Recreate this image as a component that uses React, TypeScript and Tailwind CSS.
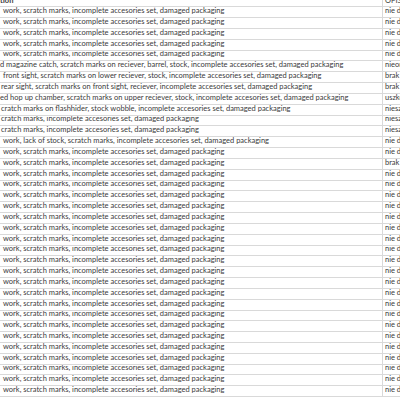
const STD = "work, scratch marks, incomplete accesories set, damaged packaging";

type Row = { desc: string; pad: string; opis: string };

const rows: Row[] = [
  { desc: STD, pad: "pl-[3px]", opis: "nie działa" },
  { desc: STD, pad: "pl-[3px]", opis: "nie działa" },
  { desc: STD, pad: "pl-[3px]", opis: "nie działa" },
  { desc: STD, pad: "pl-[3px]", opis: "nie działa" },
  { desc: STD, pad: "pl-[3px]", opis: "nie działa" },
  {
    desc: "d magazine catch, scratch marks on reciever, barrel, stock, incomplete accesories set, damaged packaging",
    pad: "pl-0",
    opis: "nieoryginalny",
  },
  {
    desc: "front sight, scratch marks on lower reciever, stock, incomplete accesories set, damaged packaging",
    pad: "pl-[3px]",
    opis: "brak",
  },
  {
    desc: "rear sight, scratch marks on front sight, reciever, incomplete accesories set, damaged packaging",
    pad: "pl-[1px]",
    opis: "brak",
  },
  {
    desc: "ed hop up chamber, scratch marks on upper reciever, stock, incomplete accesories set, damaged packaging",
    pad: "pl-0",
    opis: "uszkodzony",
  },
  {
    desc: "cratch marks on flashhider, stock wobble, incomplete accesories set, damaged packaging",
    pad: "pl-[1px]",
    opis: "nieszczelny",
  },
  { desc: "cratch marks, incomplete accesories set, damaged packaging", pad: "pl-[1px]", opis: "nieszczelny" },
  { desc: "cratch marks, incomplete accesories set, damaged packaging", pad: "pl-[1px]", opis: "nieszczelny" },
  {
    desc: "work, lack of stock, scratch marks, incomplete accesories set, damaged packaging",
    pad: "pl-[3px]",
    opis: "nie działa",
  },
  { desc: STD, pad: "pl-[3px]", opis: "nie działa" },
  { desc: STD, pad: "pl-[3px]", opis: "brak" },
  ...Array.from({ length: 21 }, () => ({ desc: STD, pad: "pl-[3px]", opis: "nie działa" })),
];

const App = () => {
  return (
    <div className="w-[400px] h-[400px] overflow-hidden bg-white text-[#3a3a3a] font-['Lato',sans-serif] text-[7.5px]">
      <div className="-mt-[3.5px]">
        {/* header */}
        <div className="flex h-[10.83px] border-b border-[#d9d9d9] font-bold">
          <div className="w-[383px] shrink-0 overflow-hidden whitespace-nowrap border-r border-[#d9d9d9] flex items-end pb-[1px] leading-[8px]">
            tion
          </div>
          <div className="flex-1 overflow-hidden whitespace-nowrap flex items-end pb-[1px] pl-[2px] leading-[8px] font-normal">
            OPIS
          </div>
        </div>
        {rows.map((row, i) => (
          <div key={i} className="flex h-[10.83px] border-b border-[#d9d9d9]">
            <div
              className={`w-[383px] shrink-0 overflow-hidden whitespace-nowrap border-r border-[#d9d9d9] flex items-end pb-[2px] leading-[8px] ${row.pad}`}
            >
              {row.desc}
            </div>
            <div className="flex-1 overflow-hidden whitespace-nowrap flex items-end pb-[2px] pl-[2px] leading-[8px]">
              {row.opis}
            </div>
          </div>
        ))}
      </div>
    </div>
  );
};

export default App;
